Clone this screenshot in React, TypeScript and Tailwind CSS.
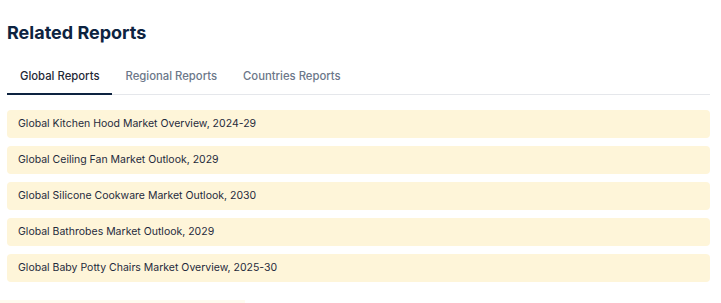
import { useState } from "react";

const tabs = ["Global Reports", "Regional Reports", "Countries Reports"];

const reports = [
  "Global Kitchen Hood Market Overview, 2024-29",
  "Global Ceiling Fan Market Outlook, 2029",
  "Global Silicone Cookware Market Outlook, 2030",
  "Global Bathrobes Market Outlook, 2029",
  "Global Baby Potty Chairs Market Overview, 2025-30",
];

export default function App() {
  const [active, setActive] = useState(0);

  return (
    <main
      className="min-h-screen bg-white"
      style={{ fontFamily: "Inter, 'Noto Sans', sans-serif" }}
    >
      <div className="w-[710px] pl-[7px] pt-[22px]">
        <h2 className="text-[18px] font-bold leading-[22px] text-[#0d2340]">
          Related Reports
        </h2>

        {/* Tabs */}
        <div className="mt-[24px] flex border-b border-[#e5e7eb]">
          {tabs.map((tab, idx) => (
            <button
              key={tab}
              type="button"
              onClick={() => setActive(idx)}
              className={
                idx === active
                  ? "-mb-px border-b-2 border-[#0d2340] px-[13px] pb-[9px] pt-0 text-[11.3px] font-medium leading-[16px] text-[#1f2937]"
                  : "-mb-px border-b-2 border-transparent px-[13px] pb-[9px] pt-0 text-[11.3px] font-medium leading-[16px] text-[#6b7789]"
              }
            >
              {tab}
            </button>
          ))}
        </div>

        {/* Report list */}
        <ul className="mt-[15px] flex flex-col gap-[8px]">
          {reports.map((title) => (
            <li
              key={title}
              className="flex h-[28px] items-center rounded-[4px] bg-[#fef5d9] px-[11px] text-[10.5px] text-[#1f2a3c]"
            >
              {title}
            </li>
          ))}
        </ul>
      </div>

      <div className="mt-[18px] h-[3px] w-[245px] bg-[#fffbef]" />
    </main>
  );
}
